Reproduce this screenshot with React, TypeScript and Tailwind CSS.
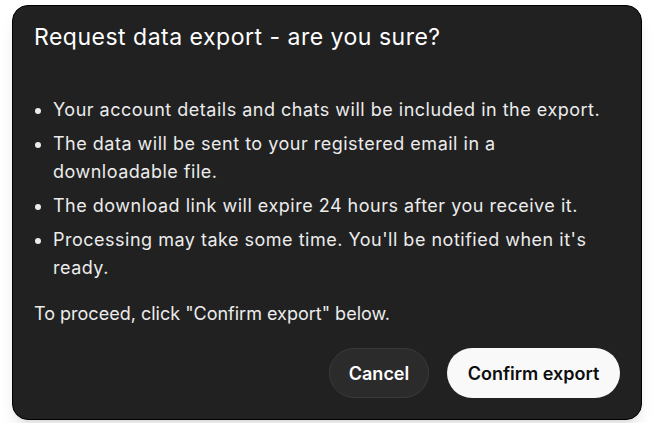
import React from 'react';

const items = [
  'Your account details and chats will be included in the export.',
  'The data will be sent to your registered email in a downloadable file.',
  'The download link will expire 24 hours after you receive it.',
  "Processing may take some time. You'll be notified when it's ready.",
];

export default function App() {
  return (
    <div className="h-[423px] w-[652px] bg-white pl-3 pt-[5px] font-['Inter',sans-serif]">
      <div className="flex h-[415px] w-[630px] flex-col rounded-2xl border border-black bg-[#212121] px-[21px] pb-[21px] pt-[17px] text-[#ececec] shadow-lg">
        <h2 className="text-[23px] leading-7 font-normal tracking-[0.5px] text-white">Request data export - are you sure?</h2>
        <ul className="mt-[45px] flex list-disc flex-col gap-[6px] pl-[19px] text-[18px] leading-[28px] tracking-[0.5px]">
          {items.map((t) => (
            <li key={t}>{t}</li>
          ))}
        </ul>
        <p className="mt-[18px] text-[18px] leading-[28px]">To proceed, click "Confirm export" below.</p>
        <div className="mt-auto flex justify-end gap-[18px]">
          <button className="h-[50px] w-[100px] rounded-full border border-[#3a3a3a] bg-[#2b2b2b] text-[18px] font-semibold text-white">
            Cancel
          </button>
          <button className="h-[50px] w-[173px] rounded-full bg-[#f9f9f9] text-[18px] font-semibold text-[#0d0d0d]">
            Confirm export
          </button>
        </div>
      </div>
    </div>
  );
}
